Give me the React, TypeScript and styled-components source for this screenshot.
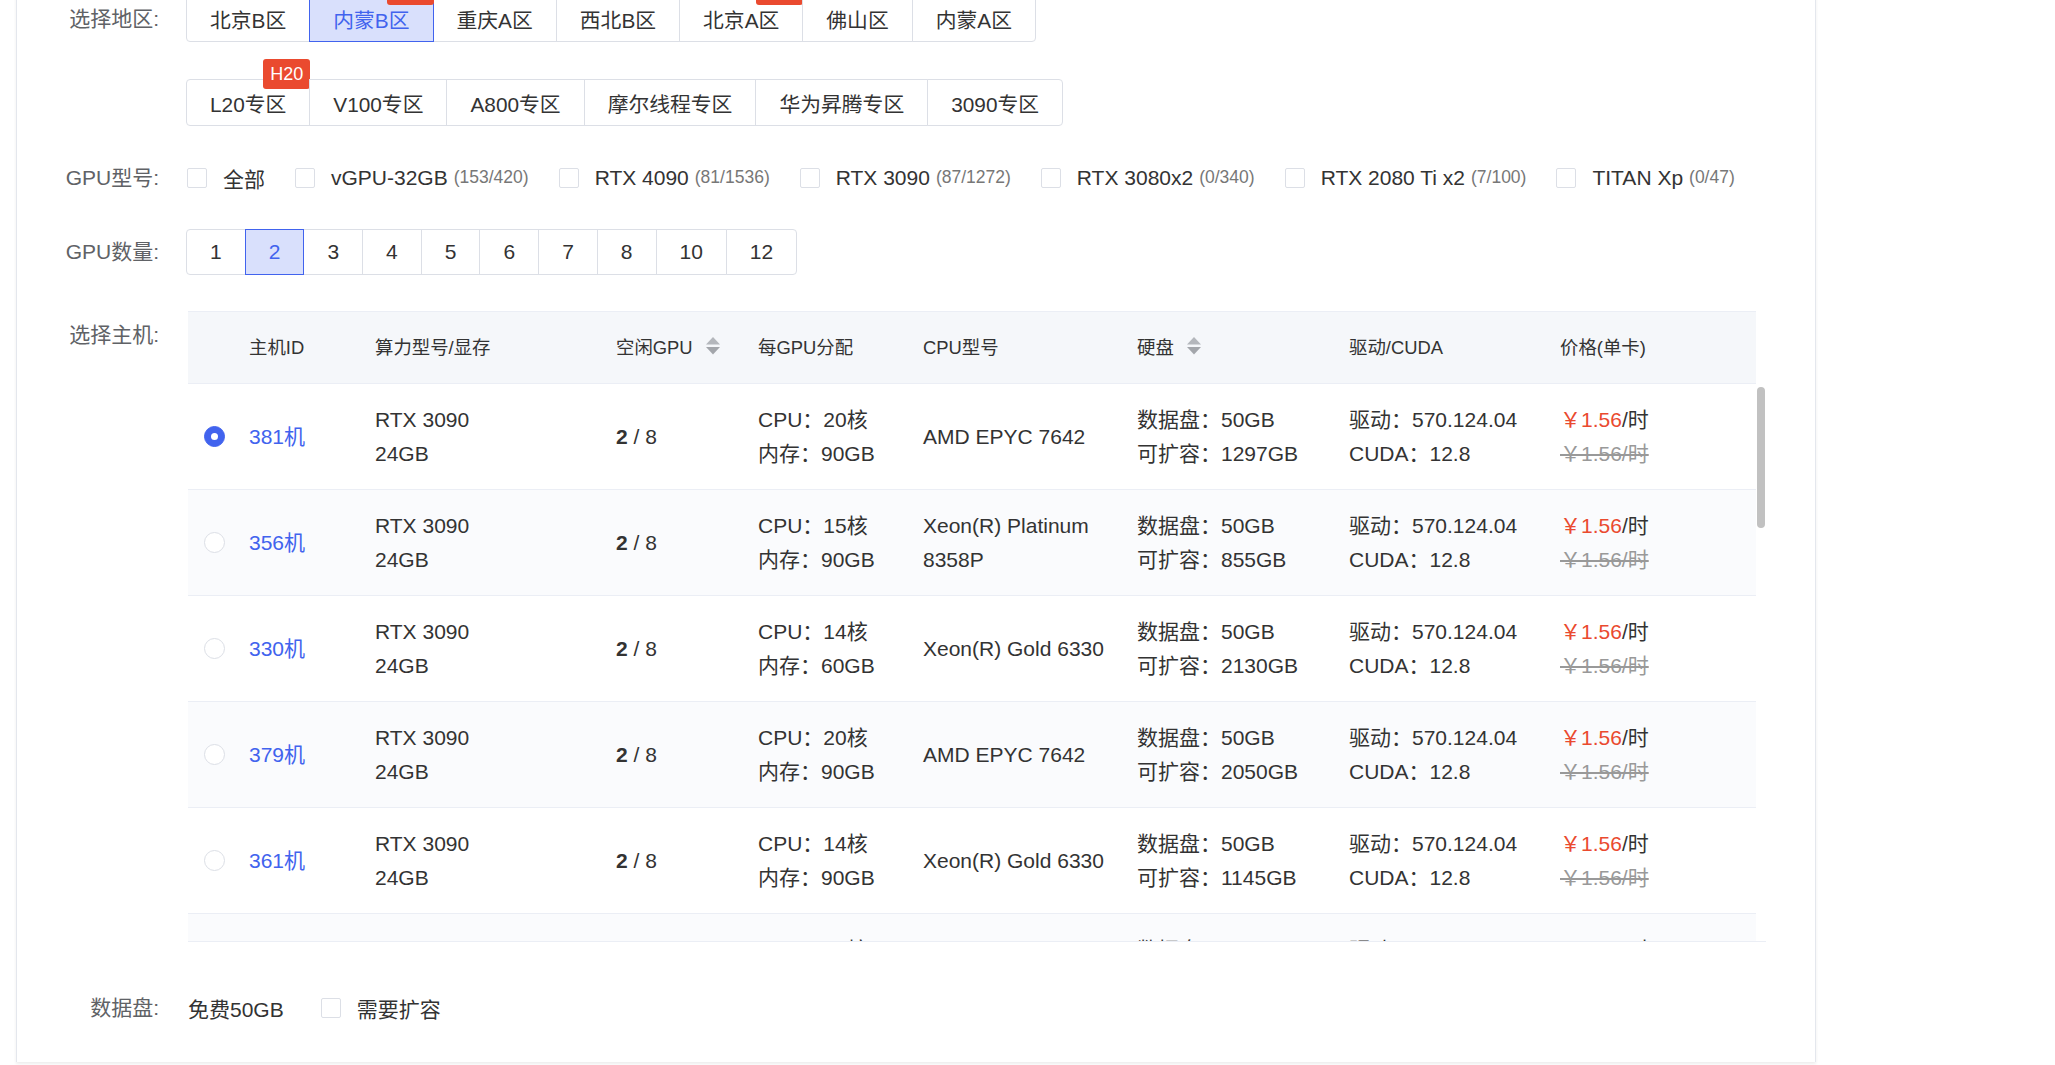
import React from "react";
import styled, { createGlobalStyle } from "styled-components";

const GlobalStyle = createGlobalStyle`
  * { box-sizing: border-box; }
  html, body { margin: 0; padding: 0; background: #fff; }
  body {
    font-family: "Liberation Sans", "Noto Sans CJK SC", sans-serif;
    color: #303133;
  }
`;

const BLUE = "#4163ee";
const RED = "#ea4a2f";

const Page = styled.div`
  width: 2055px;
  height: 1065px;
  overflow: hidden;
  background: #fff;
`;

const Card = styled.div`
  margin: -5px 0 0 16px;
  width: 1800px;
  height: 1067px;
  background: #fff;
  border-left: 1px solid #e4e7ed;
  border-right: 1px solid #e4e7ed;
  box-shadow: 0 2px 3px rgba(0, 0, 0, 0.07);
`;

const FormRow = styled.div<{ $gap?: number; $top?: boolean }>`
  display: flex;
  align-items: ${(p) => (p.$top ? "flex-start" : "center")};
  margin-top: ${(p) => p.$gap ?? 0}px;
`;

const Label = styled.div`
  width: 142px;
  flex-shrink: 0;
  text-align: right;
  font-size: 21px;
  line-height: 47px;
  color: #606266;
  margin-right: 27px;
`;

const Group = styled.div`
  display: flex;
`;

const Tab = styled.div<{ $active?: boolean; $h?: number }>`
  position: relative;
  height: ${(p) => p.$h ?? 47}px;
  padding: 0 23px;
  margin-left: -1px;
  display: flex;
  align-items: center;
  font-size: 20.8px;
  color: ${(p) => (p.$active ? BLUE : "#333")};
  background: ${(p) => (p.$active ? "#d9e0fc" : "#fff")};
  border: 1px solid ${(p) => (p.$active ? BLUE : "#dcdfe6")};
  z-index: ${(p) => (p.$active ? 1 : 0)};
  white-space: nowrap;
  &:first-child {
    margin-left: 0;
    border-radius: 4px 0 0 4px;
  }
  &:last-child {
    border-radius: 0 4px 4px 0;
  }
`;

const CountTab = styled(Tab)`
  justify-content: center;
  min-width: 58px;
  font-size: 21px;
`;

const Badge = styled.span`
  position: absolute;
  top: -21px;
  right: -1px;
  height: 30px;
  padding: 0 7px;
  border-radius: 3px;
  background: ${RED};
  color: #fff;
  font-size: 18px;
  line-height: 30px;
`;

const Checks = styled.div`
  display: flex;
  align-items: center;
  height: 47px;
  padding-left: 1px;
`;

const CheckItem = styled.label`
  display: flex;
  align-items: center;
  margin-right: 30px;
  font-size: 21px;
  color: #333;
  white-space: nowrap;
`;

const Box = styled.span`
  width: 20px;
  height: 20px;
  border: 1px solid #dcdfe6;
  border-radius: 2px;
  background: #fff;
  margin-right: 16px;
`;

const Count = styled.span`
  font-size: 17.5px;
  color: #777;
  margin-left: 6px;
`;

const COLS = "61px 126px 241px 142px 165px 214px 212px 211px 196px";

const Table = styled.div`
  width: 1578px;
  margin-left: 2px;
`;

const Head = styled.div`
  display: grid;
  grid-template-columns: ${COLS};
  width: 1568px;
  height: 73px;
  background: #f5f7fa;
  border-top: 1px solid #ebeef5;
  border-bottom: 1px solid #ebeef5;
  align-items: center;
  font-size: 18.4px;
  color: #333;
`;

const HeadCell = styled.div`
  display: flex;
  align-items: center;
  padding-bottom: 3px;
`;

const SortIcon = styled.svg`
  margin-left: 13px;
`;

const Body = styled.div`
  display: flex;
  height: 558px;
  border-bottom: 1px solid #ebeef5;
`;

const Rows = styled.div`
  width: 1568px;
  overflow: hidden;
`;

const Track = styled.div`
  width: 10px;
  padding: 3px 1px;
`;

const Thumb = styled.div`
  width: 8px;
  height: 141px;
  border-radius: 4px;
  background: #c1c1c1;
`;

const Row = styled.div<{ $striped?: boolean }>`
  display: grid;
  grid-template-columns: ${COLS};
  height: 106px;
  align-items: center;
  border-bottom: 1px solid #ebeef5;
  background: ${(p) => (p.$striped ? "#fafbfd" : "#fff")};
  font-size: 21px;
  line-height: 34px;
  color: #333;
`;

const Cell = styled.div`
  padding-right: 10px;
`;

const Radio = styled.span<{ $on?: boolean }>`
  display: flex;
  align-items: center;
  justify-content: center;
  margin-left: 16px;
  width: 21px;
  height: 21px;
  border-radius: 50%;
  border: 1px solid ${(p) => (p.$on ? BLUE : "#dcdfe6")};
  background: ${(p) => (p.$on ? BLUE : "#fff")};
  &::after {
    content: "";
    width: 7px;
    height: 7px;
    border-radius: 50%;
    background: ${(p) => (p.$on ? "#fff" : "transparent")};
  }
`;

const HostId = styled.span`
  color: ${BLUE};
`;

const Bold = styled.b`
  font-weight: 700;
`;

const Price = styled.span`
  color: ${RED};
`;

const OldPrice = styled.div`
  color: #999;
  text-decoration: line-through;
  text-decoration-thickness: 2px;
`;

const Plain = styled.span`
  font-size: 21px;
  color: #333;
  margin-left: 2px;
  margin-right: 37px;
`;

const regions1 = ["北京B区", "内蒙B区", "重庆A区", "西北B区", "北京A区", "佛山区", "内蒙A区"];
const regions2 = ["L20专区", "V100专区", "A800专区", "摩尔线程专区", "华为昇腾专区", "3090专区"];
const models: [string, string][] = [
  ["vGPU-32GB", "(153/420)"],
  ["RTX 4090", "(81/1536)"],
  ["RTX 3090", "(87/1272)"],
  ["RTX 3080x2", "(0/340)"],
  ["RTX 2080 Ti x2", "(7/100)"],
  ["TITAN Xp", "(0/47)"],
];
const counts = ["1", "2", "3", "4", "5", "6", "7", "8", "10", "12"];

const hosts = [
  { id: "381机", cpu: "20核", mem: "90GB", model: "AMD EPYC 7642", ext: "1297GB" },
  { id: "356机", cpu: "15核", mem: "90GB", model: "Xeon(R) Platinum 8358P", ext: "855GB" },
  { id: "330机", cpu: "14核", mem: "60GB", model: "Xeon(R) Gold 6330", ext: "2130GB" },
  { id: "379机", cpu: "20核", mem: "90GB", model: "AMD EPYC 7642", ext: "2050GB" },
  { id: "361机", cpu: "14核", mem: "90GB", model: "Xeon(R) Gold 6330", ext: "1145GB" },
  { id: "342机", cpu: "16核", mem: "90GB", model: "Xeon(R) Gold 6330", ext: "980GB" },
];

const Sort = () => (
  <SortIcon width="14" height="18" viewBox="0 0 14 18">
    <polygon points="7,0 14,7.5 0,7.5" fill="#b4b7bc" />
    <polygon points="0,10 14,10 7,17.5" fill="#a3a6ab" />
  </SortIcon>
);

export default function App() {
  return (
    <Page>
      <GlobalStyle />
      <Card>
        <FormRow>
          <Label>选择地区:</Label>
          <Group>
            {regions1.map((r, i) => (
              <Tab key={r} $active={i === 1}>
                {r}
                {(i === 1 || i === 4) && <Badge>H20</Badge>}
              </Tab>
            ))}
          </Group>
        </FormRow>
        <FormRow $gap={37}>
          <Label />
          <Group>
            {regions2.map((r, i) => (
              <Tab key={r}>
                {r}
                {i === 0 && <Badge>H20</Badge>}
              </Tab>
            ))}
          </Group>
        </FormRow>
        <FormRow $gap={28}>
          <Label>GPU型号:</Label>
          <Checks>
            <CheckItem>
              <Box />
              全部
            </CheckItem>
            {models.map(([m, c]) => (
              <CheckItem key={m}>
                <Box />
                {m}
                <Count>{c}</Count>
              </CheckItem>
            ))}
          </Checks>
        </FormRow>
        <FormRow $gap={27}>
          <Label>GPU数量:</Label>
          <Group>
            {counts.map((c) => (
              <CountTab key={c} $h={46} $active={c === "2"}>
                {c}
              </CountTab>
            ))}
          </Group>
        </FormRow>
        <FormRow $gap={36} $top>
          <Label>选择主机:</Label>
          <Table>
            <Head>
              <HeadCell />
              <HeadCell>主机ID</HeadCell>
              <HeadCell>算力型号/显存</HeadCell>
              <HeadCell>
                空闲GPU
                <Sort />
              </HeadCell>
              <HeadCell>每GPU分配</HeadCell>
              <HeadCell>CPU型号</HeadCell>
              <HeadCell>
                硬盘
                <Sort />
              </HeadCell>
              <HeadCell>驱动/CUDA</HeadCell>
              <HeadCell>价格(单卡)</HeadCell>
            </Head>
            <Body>
              <Rows>
                {hosts.map((h, i) => (
                  <Row key={h.id} $striped={i % 2 === 1}>
                    <Cell>
                      <Radio $on={i === 0} />
                    </Cell>
                    <Cell>
                      <HostId>{h.id}</HostId>
                    </Cell>
                    <Cell>
                      <div>RTX 3090</div>
                      <div>24GB</div>
                    </Cell>
                    <Cell>
                      <Bold>2</Bold> / 8
                    </Cell>
                    <Cell>
                      <div>CPU：{h.cpu}</div>
                      <div>内存：{h.mem}</div>
                    </Cell>
                    <Cell>{h.model}</Cell>
                    <Cell>
                      <div>数据盘：50GB</div>
                      <div>可扩容：{h.ext}</div>
                    </Cell>
                    <Cell>
                      <div>驱动：570.124.04</div>
                      <div>CUDA：12.8</div>
                    </Cell>
                    <Cell>
                      <div>
                        <Price>￥1.56</Price>/时
                      </div>
                      <OldPrice>￥1.56/时</OldPrice>
                    </Cell>
                  </Row>
                ))}
              </Rows>
              <Track>
                <Thumb />
              </Track>
            </Body>
          </Table>
        </FormRow>
        <FormRow $gap={42}>
          <Label>数据盘:</Label>
          <Plain>免费50GB</Plain>
          <CheckItem>
            <Box />
            需要扩容
          </CheckItem>
        </FormRow>
      </Card>
    </Page>
  );
}
